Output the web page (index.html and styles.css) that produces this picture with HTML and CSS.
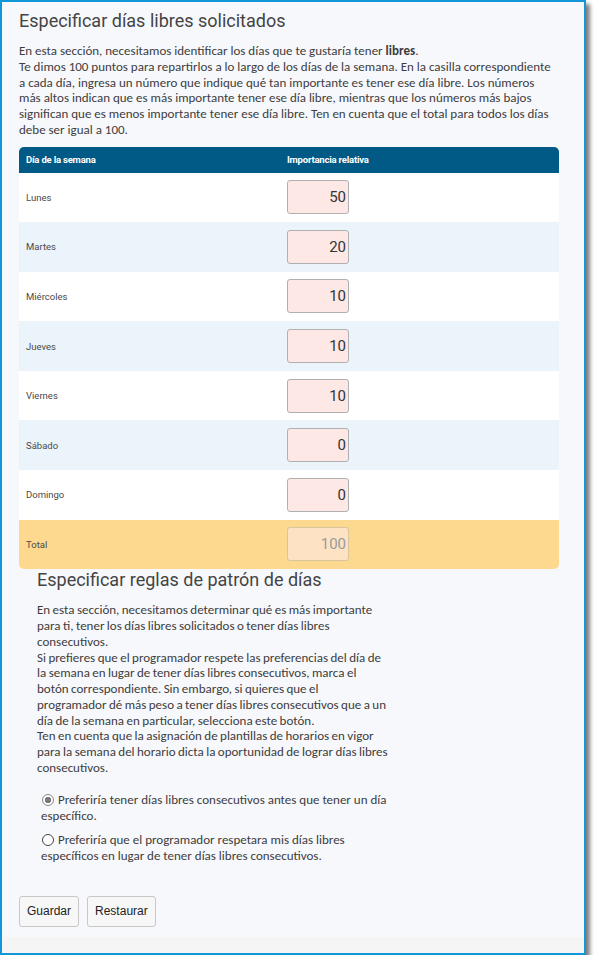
FILE: index.html
```html
<!DOCTYPE html>
<html lang="es">
<head>
<meta charset="utf-8">
<title>Especificar días libres solicitados</title>
<link rel="stylesheet" href="styles.css">
</head>
<body>
<div class="window">
  <section class="offdays">
    <h1 class="title">Especificar días libres solicitados</h1>
    <p class="text">En esta sección, necesitamos identificar los días que te gustaría tener <b>libres</b>.<br>Te dimos 100 puntos para repartirlos a lo largo de los días de la semana. En la casilla correspondiente a cada día, ingresa un número que indique qué tan importante es tener ese día libre. Los números más altos indican que es más importante tener ese día libre, mientras que los números más bajos significan que es menos importante tener ese día libre. Ten en cuenta que el total para todos los días debe ser igual a 100.</p>
    <table class="grid">
      <thead>
        <tr><th class="col-day">Día de la semana</th><th>Importancia relativa</th></tr>
      </thead>
      <tbody>
        <tr><td>Lunes</td><td><input class="num" type="text" value="50"></td></tr>
        <tr class="alt"><td>Martes</td><td><input class="num" type="text" value="20"></td></tr>
        <tr><td>Miércoles</td><td><input class="num" type="text" value="10"></td></tr>
        <tr class="alt"><td>Jueves</td><td><input class="num" type="text" value="10"></td></tr>
        <tr><td>Viernes</td><td><input class="num" type="text" value="10"></td></tr>
        <tr class="alt"><td>Sábado</td><td><input class="num" type="text" value="0"></td></tr>
        <tr><td>Domingo</td><td><input class="num" type="text" value="0"></td></tr>
        <tr class="total"><td>Total</td><td><input class="num" type="text" value="100" disabled></td></tr>
      </tbody>
    </table>
  </section>
  <section class="pattern">
    <h2 class="title">Especificar reglas de patrón de días</h2>
    <p class="text">En esta sección, necesitamos determinar qué es más importante para ti, tener los días libres solicitados o tener días libres consecutivos.<br>Si prefieres que el programador respete las preferencias del día de la semana en lugar de tener días libres consecutivos, marca el botón correspondiente. Sin embargo, si quieres que el programador dé más peso a tener días libres consecutivos que a un día de la semana en particular, selecciona este botón.<br>Ten en cuenta que la asignación de plantillas de horarios en vigor para la semana del horario dicta la oportunidad de lograr días libres consecutivos.</p>
    <div class="options">
      <label class="option"><input class="radio" type="radio" name="rule" checked> Preferiría tener días libres consecutivos antes que tener un día específico.</label>
      <label class="option"><input class="radio" type="radio" name="rule"> Preferiría que el programador respetara mis días libres específicos en lugar de tener días libres consecutivos.</label>
    </div>
  </section>
  <div class="actions">
    <button class="btn" type="button">Guardar</button>
    <button class="btn" type="button">Restaurar</button>
  </div>
  <div class="footer"></div>
</div>
</body>
</html>
```

FILE: styles.css
```css
* { box-sizing: border-box; }
html, body { margin: 0; padding: 0; background: #ffffff; }
body { font-family: Carlito, "Liberation Sans", sans-serif; color: #444; }

.window {
  width: 586px;
  height: 955px;
  border: 2px solid #1196da;
  background: #f7f8fc;
  box-shadow: 4px 4px 4px rgba(0, 0, 0, 0.5);
  display: flex;
  flex-direction: column;
}

.offdays { padding: 8px 25px 0 17px; }

.title {
  font-family: Roboto, sans-serif;
  font-weight: 400;
  font-size: 18px;
  line-height: 22px;
  margin: 0;
  color: #444;
}

.text {
  font-family: Carlito, "Liberation Sans", sans-serif;
  font-size: 13px;
  line-height: 15.75px;
  margin: 11px 0 0;
  color: #3d3d3d;
}
.text b { font-weight: 700; }

.grid {
  width: 100%;
  margin-top: 9px;
  border-collapse: separate;
  border-spacing: 0;
  font-family: Roboto, sans-serif;
}
.grid th {
  background: #015a85;
  color: #fff;
  font-size: 9.5px;
  font-weight: 700;
  letter-spacing: -0.2px;
  text-align: left;
  height: 26px;
  padding: 0 7px;
}
.grid th:first-child { border-top-left-radius: 5px; }
.grid th:last-child { border-top-right-radius: 5px; }
.grid th.col-day { width: 261px; }
.grid td {
  height: 49.6px;
  padding: 0 7px;
  font-size: 9.5px;
  color: #4a4a4a;
  background: #ffffff;
}
.grid tr.alt td { background: #ebf4fb; }
.grid tr.total td { background: #fdd98f; }
.grid tr.total td:first-child { border-bottom-left-radius: 5px; }
.grid tr.total td:last-child { border-bottom-right-radius: 5px; }

.num {
  display: block;
  width: 62px;
  height: 34px;
  border: 1px solid #b0b0b0;
  border-radius: 3px;
  background: #fde8e6;
  font-family: Roboto, sans-serif;
  font-size: 15px;
  color: #333;
  text-align: right;
  padding: 0 2px;
  margin: 0;
}
.num:disabled {
  background: #fde2c4;
  border-color: #d8c4a0;
  color: #9a9a9a;
}

.pattern { padding: 0 0 0 35px; }
.pattern .text { width: 352px; word-spacing: -0.5px; }

.options { margin-top: 16px; padding-left: 4px; width: 356px; }
.option {
  display: block;
  font-family: Carlito, "Liberation Sans", sans-serif;
  font-size: 13px;
  line-height: 16px;
  color: #3d3d3d;
  margin-bottom: 8px;
}
.radio {
  -webkit-appearance: none;
  appearance: none;
  width: 12px;
  height: 12px;
  margin: 0 1px 0 1px;
  border: 1px solid #444;
  border-radius: 50%;
  background: #fff;
  vertical-align: -2px;
}
.radio:checked {
  border-color: #8a8a8a;
  background: radial-gradient(circle, #7a7a7a 0 3px, #fff 3.5px);
}

.actions {
  display: flex;
  gap: 8px;
  padding: 24px 0 0 17px;
}
.btn {
  height: 31px;
  padding: 0 7px;
  border: 1px solid #c8c8c8;
  border-radius: 3px;
  background: #f7f7f7;
  font-family: "Liberation Sans", Arial, sans-serif;
  font-size: 12px;
  color: #222;
}

.footer {
  margin-top: auto;
  height: 16px;
  background: #f5f5f5;
}
```
